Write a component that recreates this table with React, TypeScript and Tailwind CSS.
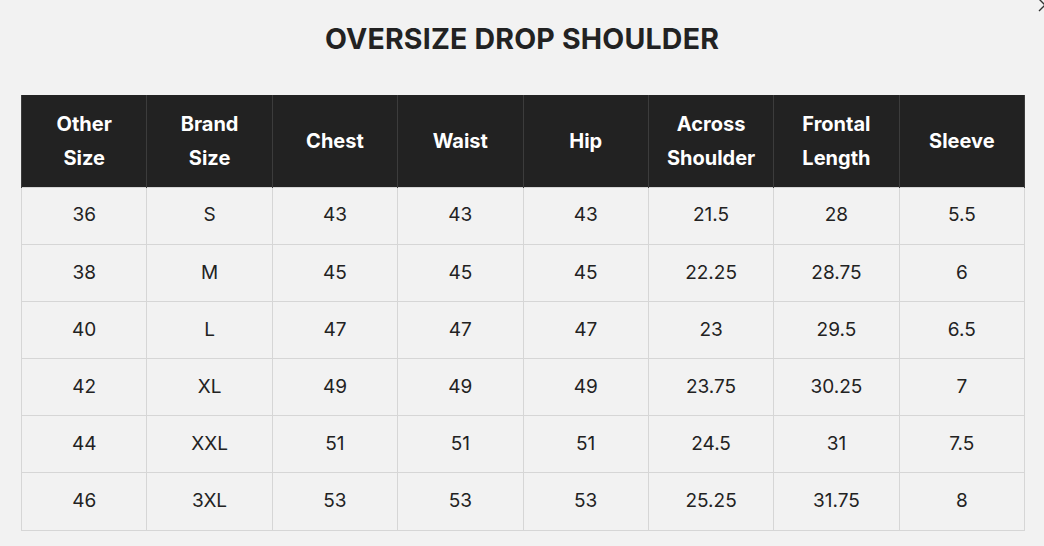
const headers: string[][] = [
  ['Other', 'Size'],
  ['Brand', 'Size'],
  ['Chest'],
  ['Waist'],
  ['Hip'],
  ['Across', 'Shoulder'],
  ['Frontal', 'Length'],
  ['Sleeve'],
];

const rows: string[][] = [
  ['36', 'S', '43', '43', '43', '21.5', '28', '5.5'],
  ['38', 'M', '45', '45', '45', '22.25', '28.75', '6'],
  ['40', 'L', '47', '47', '47', '23', '29.5', '6.5'],
  ['42', 'XL', '49', '49', '49', '23.75', '30.25', '7'],
  ['44', 'XXL', '51', '51', '51', '24.5', '31', '7.5'],
  ['46', '3XL', '53', '53', '53', '25.25', '31.75', '8'],
];

export default function App() {
  return (
    <div
      className="relative w-[1044px] h-[546px] overflow-hidden bg-[#f2f2f2] text-[#222]"
      style={{ fontFamily: 'Inter, "Open Sans", sans-serif' }}
    >
      <button className="absolute top-[-3px] right-[-9px] text-[#333]">
        <svg width="16" height="16" viewBox="0 0 16 16" fill="none" stroke="currentColor" strokeWidth="1.4">
          <path d="M2 2 L14 14 M14 2 L2 14" />
        </svg>
      </button>

      <h2 className="pt-[22px] text-center text-[28.5px] leading-[34px] font-bold tracking-[0.2px] text-[#222]">
        OVERSIZE DROP SHOULDER
      </h2>

      <div className="px-[21px] pt-[39px]">
        <table className="w-[1004px] table-fixed border-collapse">
          <thead>
            <tr className="bg-[#222]">
              {headers.map((h, i) => (
                <th
                  key={i}
                  className="h-[92px] border-x border-[#3c3c3c] text-center align-middle text-[20px] leading-[34px] font-bold text-white"
                >
                  {h.map((line) => (
                    <div key={line}>{line}</div>
                  ))}
                </th>
              ))}
            </tr>
          </thead>
          <tbody>
            {rows.map((r, i) => (
              <tr key={i}>
                {r.map((c, j) => (
                  <td
                    key={j}
                    className="h-[57.2px] border border-[#d6d6d6] text-center align-middle text-[19px] text-[#222]"
                  >
                    {c}
                  </td>
                ))}
              </tr>
            ))}
          </tbody>
        </table>
      </div>
    </div>
  );
}
